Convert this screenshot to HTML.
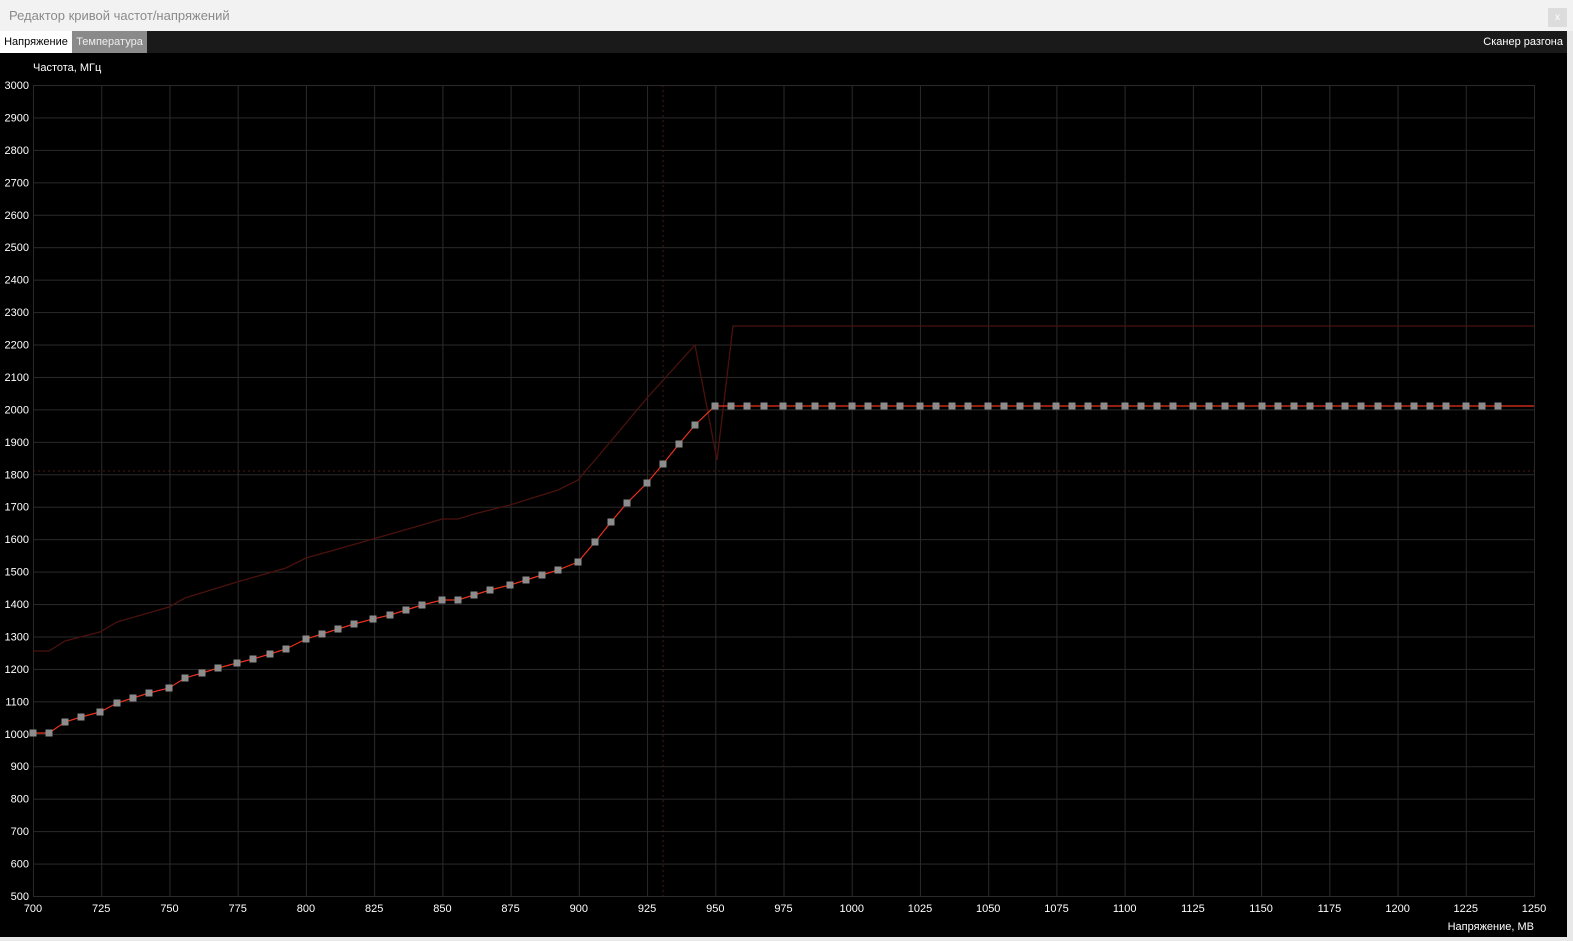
<!DOCTYPE html>
<html><head><meta charset="utf-8"><style>
html,body{margin:0;padding:0;width:1573px;height:941px;overflow:hidden;background:#000;font-family:"Liberation Sans",sans-serif}
#title{position:absolute;left:0;top:0;width:1573px;height:31px;background:#f2f2f2;color:#8a8a8a;font-size:13px;line-height:31px}
#title span{position:absolute;left:9px}
#x{position:absolute;right:6px;top:8px;width:19px;height:19px;background:#dcdcdc;color:#fff;font-size:10px;line-height:19px;text-align:center}
#tabs{position:absolute;left:0;top:31px;width:1573px;height:22px;background:#1a1a1a;font-size:11px;line-height:22px}
.t1{position:absolute;left:0;top:0;width:72px;height:22px;background:#fff;color:#000;text-align:center}
.t2{position:absolute;left:72px;top:0;width:75px;height:22px;background:#8a8a8a;color:#eee;text-align:center}
.t3{position:absolute;right:10px;top:0;color:#fff}
#rb{position:absolute;left:1567px;top:31px;width:6px;height:910px;background:#e8e8e8}
#bb{position:absolute;left:0;top:937px;width:1573px;height:4px;background:#e8e8e8}
svg{position:absolute;left:0;top:53px}
</style></head><body>
<div id="title"><span>Редактор кривой частот/напряжений</span><div id="x">x</div></div>
<div id="tabs"><div class="t1">Напряжение</div><div class="t2">Температура</div><div class="t3">Сканер разгона</div></div>
<svg width="1567" height="884" viewBox="0 53 1567 884" font-family="Liberation Sans" font-size="11" fill="#fff">
<defs>
<pattern id="g" x="33" y="85" width="68.227" height="32.44" patternUnits="userSpaceOnUse">
<path d="M0 0.5H68.227M0.5 0V32.44" stroke="#2a2a2a" stroke-width="1" fill="none"/>
</pattern>
<marker id="m" markerWidth="7" markerHeight="7" refX="3.5" refY="3.5" markerUnits="userSpaceOnUse"><rect width="7" height="7" fill="#8c8c8c"/></marker>
</defs>
<rect x="33" y="85" width="1501" height="811" fill="url(#g)"/>
<path d="M33 896.5H1534.5V85" stroke="#2a2a2a" fill="none"/>
<line x1="663" y1="85" x2="663" y2="896" stroke="#4a1a14" stroke-dasharray="2,3"/>
<line x1="33" y1="471" x2="1534" y2="471" stroke="#4a1a14" stroke-dasharray="2,3"/>
<polyline fill="none" stroke="#4a120c" stroke-width="1.3" points="33,651 49,651 65,641 100,632 117,622 169,607 185,598 237,582 286,568 306,558 338,549 373,539 422,525 442,519 458,519 474,514 510,505 558,490 578,480 611,441 647,398 695,345 717,460 733,326 1534,326"/>
<polyline fill="none" stroke="#e8321c" stroke-width="1.2" points="33,733 49,733 65,722 81,717 100,712 117,703 133,698 149,693 169,688 185,678 202,673 218,668 237,663 253,659 270,654 286,649 306,639 322,634 338,629 354,624 373,619 390,615 406,610 422,605 442,600 458,600 474,595 490,590 510,585 526,580 542,575 558,570 578,562 595,542 611,522 627,503 647,483 663,464 679,444 695,425 715,406 1534,406"/>
<polyline fill="none" stroke="none" marker-start="url(#m)" marker-mid="url(#m)" marker-end="url(#m)" points="33,733 49,733 65,722 81,717 100,712 117,703 133,698 149,693 169,688 185,678 202,673 218,668 237,663 253,659 270,654 286,649 306,639 322,634 338,629 354,624 373,619 390,615 406,610 422,605 442,600 458,600 474,595 490,590 510,585 526,580 542,575 558,570 578,562 595,542 611,522 627,503 647,483 663,464 679,444 695,425 715,406 731,406 747,406 764,406 783,406 799,406 815,406 832,406 852,406 868,406 884,406 900,406 920,406 936,406 952,406 968,406 988,406 1004,406 1020,406 1037,406 1056,406 1072,406 1088,406 1104,406 1125,406 1141,406 1157,406 1173,406 1193,406 1209,406 1225,406 1241,406 1262,406 1278,406 1294,406 1310,406 1329,406 1345,406 1361,406 1378,406 1398,406 1414,406 1430,406 1446,406 1466,406 1482,406 1498,406"/>
<text x="33" y="71">Частота, МГц</text>
<text x="1534" y="930" text-anchor="end">Напряжение, МВ</text>
<g text-anchor="end">
<text x="29" y="89">3000</text><text x="29" y="121.4">2900</text><text x="29" y="153.9">2800</text><text x="29" y="186.3">2700</text><text x="29" y="218.8">2600</text><text x="29" y="251.2">2500</text><text x="29" y="283.6">2400</text><text x="29" y="316.1">2300</text><text x="29" y="348.5">2200</text><text x="29" y="381">2100</text><text x="29" y="413.4">2000</text><text x="29" y="445.8">1900</text><text x="29" y="478.3">1800</text><text x="29" y="510.7">1700</text><text x="29" y="543.2">1600</text><text x="29" y="575.6">1500</text><text x="29" y="608">1400</text><text x="29" y="640.5">1300</text><text x="29" y="672.9">1200</text><text x="29" y="705.4">1100</text><text x="29" y="737.8">1000</text><text x="29" y="770.2">900</text><text x="29" y="802.7">800</text><text x="29" y="835.1">700</text><text x="29" y="867.6">600</text><text x="29" y="900">500</text>
</g>
<g text-anchor="middle">
<text x="33" y="912">700</text><text x="101.2" y="912">725</text><text x="169.5" y="912">750</text><text x="237.7" y="912">775</text><text x="305.9" y="912">800</text><text x="374.2" y="912">825</text><text x="442.4" y="912">850</text><text x="510.6" y="912">875</text><text x="578.8" y="912">900</text><text x="647.1" y="912">925</text><text x="715.3" y="912">950</text><text x="783.5" y="912">975</text><text x="851.8" y="912">1000</text><text x="920" y="912">1025</text><text x="988.2" y="912">1050</text><text x="1056.5" y="912">1075</text><text x="1124.7" y="912">1100</text><text x="1192.9" y="912">1125</text><text x="1261.1" y="912">1150</text><text x="1329.4" y="912">1175</text><text x="1397.6" y="912">1200</text><text x="1465.8" y="912">1225</text><text x="1534" y="912">1250</text>
</g>
</svg>
<div id="rb"></div><div id="bb"></div>
</body></html>
